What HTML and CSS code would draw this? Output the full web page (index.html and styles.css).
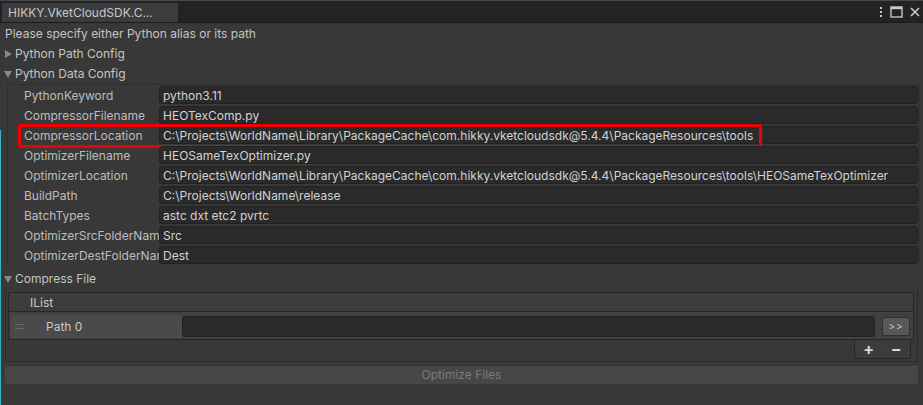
FILE: index.html
```html
<!DOCTYPE html>
<html>
<head>
<meta charset="utf-8">
<link rel="stylesheet" href="styles.css">
</head>
<body>
<div class="window">
  <div class="titlebar">
    <div class="tab">HIKKY.VketCloudSDK.C...</div>
    <div class="win-icons">
      <svg width="4" height="12" viewBox="0 0 4 12"><rect x="1" y="1" width="2" height="2" fill="#c8c8c8"/><rect x="1" y="5" width="2" height="2" fill="#c8c8c8"/><rect x="1" y="9" width="2" height="2" fill="#c8c8c8"/></svg>
      <svg width="13" height="12" viewBox="0 0 13 12"><rect x="1" y="1" width="11" height="10" fill="none" stroke="#c8c8c8" stroke-width="1.4"/><rect x="1" y="1" width="11" height="2.2" fill="#c8c8c8"/></svg>
      <svg width="10" height="10" viewBox="0 0 10 10"><path d="M1 1 L9 9 M9 1 L1 9" stroke="#c8c8c8" stroke-width="1.6"/></svg>
    </div>
  </div>
  <div class="content">
    <div class="line help">Please specify either Python alias or its path</div>
    <div class="line foldout"><span class="tri closed"></span>Python Path Config</div>
    <div class="line foldout"><span class="tri open"></span>Python Data Config</div>
    <div class="group">
      <div class="row"><div class="label">PythonKeyword</div><div class="field">python3.11</div></div>
      <div class="row"><div class="label">CompressorFilename</div><div class="field">HEOTexComp.py</div></div>
      <div class="row"><div class="label">CompressorLocation</div><div class="field">C:\Projects\WorldName\Library\PackageCache\com.hikky.vketcloudsdk@5.4.4\PackageResources\tools</div><div class="highlight"></div></div>
      <div class="row"><div class="label">OptimizerFilename</div><div class="field">HEOSameTexOptimizer.py</div></div>
      <div class="row"><div class="label">OptimizerLocation</div><div class="field">C:\Projects\WorldName\Library\PackageCache\com.hikky.vketcloudsdk@5.4.4\PackageResources\tools\HEOSameTexOptimizer</div></div>
      <div class="row"><div class="label">BuildPath</div><div class="field">C:\Projects\WorldName\release</div></div>
      <div class="row"><div class="label">BatchTypes</div><div class="field">astc dxt etc2 pvrtc</div></div>
      <div class="row"><div class="label">OptimizerSrcFolderNam</div><div class="field">Src</div></div>
      <div class="row"><div class="label">OptimizerDestFolderNar</div><div class="field">Dest</div></div>
    </div>
    <div class="line foldout compress"><span class="tri open"></span>Compress File</div>
    <div class="listbox">
      <div class="list-header">IList</div>
      <div class="list-body">
        <div class="element">
          <div class="el-label"><span class="handle"></span><span class="el-name">Path 0</span></div>
          <div class="el-field"></div>
          <div class="el-btn">&gt;&gt;</div>
        </div>
      </div>
      <div class="list-footer">
        <div class="addrem"><span class="plus">+</span><span class="minus">−</span></div>
      </div>
    </div>
    <div class="optimize">Optimize Files</div>
  </div>
  <div class="edge"></div>
</div>
</body>
</html>
```
FILE: styles.css
```css
html, body {
  margin: 0;
  padding: 0;
}
body {
  background: #383838;
  font-family: Inter, "Noto Sans", sans-serif;
  font-size: 12px;
  color: #c4c4c4;
  width: 923px;
  height: 405px;
  overflow: hidden;
}
.window {
  position: relative;
  height: 405px;
}
.titlebar {
  height: 21px;
  background: #232323;
  border-top: 1px solid #474747;
  border-bottom: 1px solid #1b1b1b;
  display: flex;
  align-items: flex-end;
  justify-content: space-between;
  box-sizing: content-box;
}
.tab {
  margin-left: 2px;
  width: 176px;
  height: 19px;
  background: #3c3c3c;
  color: #c8c8c8;
  line-height: 19px;
  padding-left: 6px;
  box-sizing: border-box;
  font-size: 12px;
}
.win-icons {
  align-self: center;
  display: flex;
  align-items: center;
  gap: 7px;
  padding-right: 3px;
}
.content {
  padding: 1px 0 0 0;
}
.line {
  height: 20px;
  line-height: 20px;
  padding-left: 5px;
  white-space: nowrap;
}
.foldout {
  display: flex;
  align-items: center;
  padding-left: 4px;
}
.tri {
  display: inline-block;
  width: 0;
  height: 0;
  margin-right: 3px;
}
.tri.closed {
  border-top: 4px solid transparent;
  border-bottom: 4px solid transparent;
  border-left: 7px solid #8a8a8a;
  margin-left: 1px;
}
.tri.open {
  border-left: 4px solid transparent;
  border-right: 4px solid transparent;
  border-top: 7px solid #8a8a8a;
}
.group {
  margin: 0 3px 0 7px;
  border: 1px solid #2e2e2e;
  border-bottom: none;
  padding: 1px 0 1px 0;
  display: flex;
  flex-direction: column;
  gap: 2px;
}
.row {
  position: relative;
  display: flex;
  align-items: center;
  height: 18px;
}
.label {
  width: 135px;
  padding-left: 16px;
  overflow: hidden;
  white-space: nowrap;
  color: #bdbdbd;
  flex: none;
}
.field {
  flex: 1;
  height: 18px;
  line-height: 17px;
  background: #2a2a2a;
  border: 1px solid #212121;
  border-radius: 3px;
  box-sizing: border-box;
  padding-left: 3px;
  color: #d2d2d2;
  white-space: nowrap;
  overflow: hidden;
  margin-right: 1px;
}
.highlight {
  position: absolute;
  left: 10px;
  top: -2px;
  width: 744px;
  height: 24px;
  border: 3px solid #f00000;
  box-sizing: border-box;
}
.compress {
  margin-top: 4px;
}
.listbox {
  margin: 0 5px 0 5px;
  border: 1px solid #2b2b2b;
  border-top: none;
  padding: 3px 0 0 0;
  height: 73px;
  box-sizing: border-box;
}
.list-header {
  margin: 0 3px 0 2px;
  height: 20px;
  line-height: 20px;
  background: #3c3c3c;
  border: 1px solid #262626;
  border-radius: 2px 2px 0 0;
  padding-left: 21px;
  color: #cacaca;
  box-sizing: border-box;
}
.list-body {
  margin: 0 3px 0 2px;
  height: 28px;
  background: #414141;
  border: 1px solid #262626;
  border-top: none;
  box-sizing: border-box;
  padding: 3px 3px 0 2px;
}
.element {
  display: flex;
  align-items: center;
  height: 23px;
}
.el-label {
  width: 171px;
  height: 23px;
  background: #4a4a4a;
  border-radius: 3px 0 0 3px;
  display: flex;
  align-items: center;
  flex: none;
}
.handle {
  width: 9px;
  height: 3px;
  border-top: 1px solid #6a6a6a;
  border-bottom: 1px solid #6a6a6a;
  margin-left: 4px;
}
.el-name {
  margin-left: 22px;
  color: #c8c8c8;
}
.el-field {
  flex: 1;
  height: 21px;
  background: #2a2a2a;
  border: 1px solid #222;
  border-radius: 3px;
  box-sizing: border-box;
}
.el-btn {
  width: 28px;
  height: 19px;
  margin-left: 7px;
  margin-right: 0;
  background: #585858;
  border: 1px solid #303030;
  border-radius: 2px;
  box-sizing: border-box;
  color: #c4c4c4;
  font-size: 10px;
  line-height: 17px;
  text-align: center;
  letter-spacing: 1px;
}
.list-footer {
  display: flex;
  justify-content: flex-end;
  padding-right: 6px;
}
.addrem {
  width: 57px;
  height: 19px;
  background: #3c3c3c;
  border: 1px solid #262626;
  border-top: none;
  border-radius: 0 0 3px 3px;
  box-sizing: border-box;
  display: flex;
  align-items: center;
  justify-content: space-around;
  color: #d8d8d8;
  font-size: 16px;
  font-weight: bold;
  line-height: 16px;
}
.optimize {
  margin: 4px 5px 0 5px;
  height: 18px;
  line-height: 18px;
  background: #464646;
  color: #7c7c7c;
  text-align: center;
  border-radius: 2px;
}
.edge {
  position: absolute;
  left: 0;
  top: 130px;
  width: 1px;
  height: 275px;
  background: #35b4c6;
}
```
